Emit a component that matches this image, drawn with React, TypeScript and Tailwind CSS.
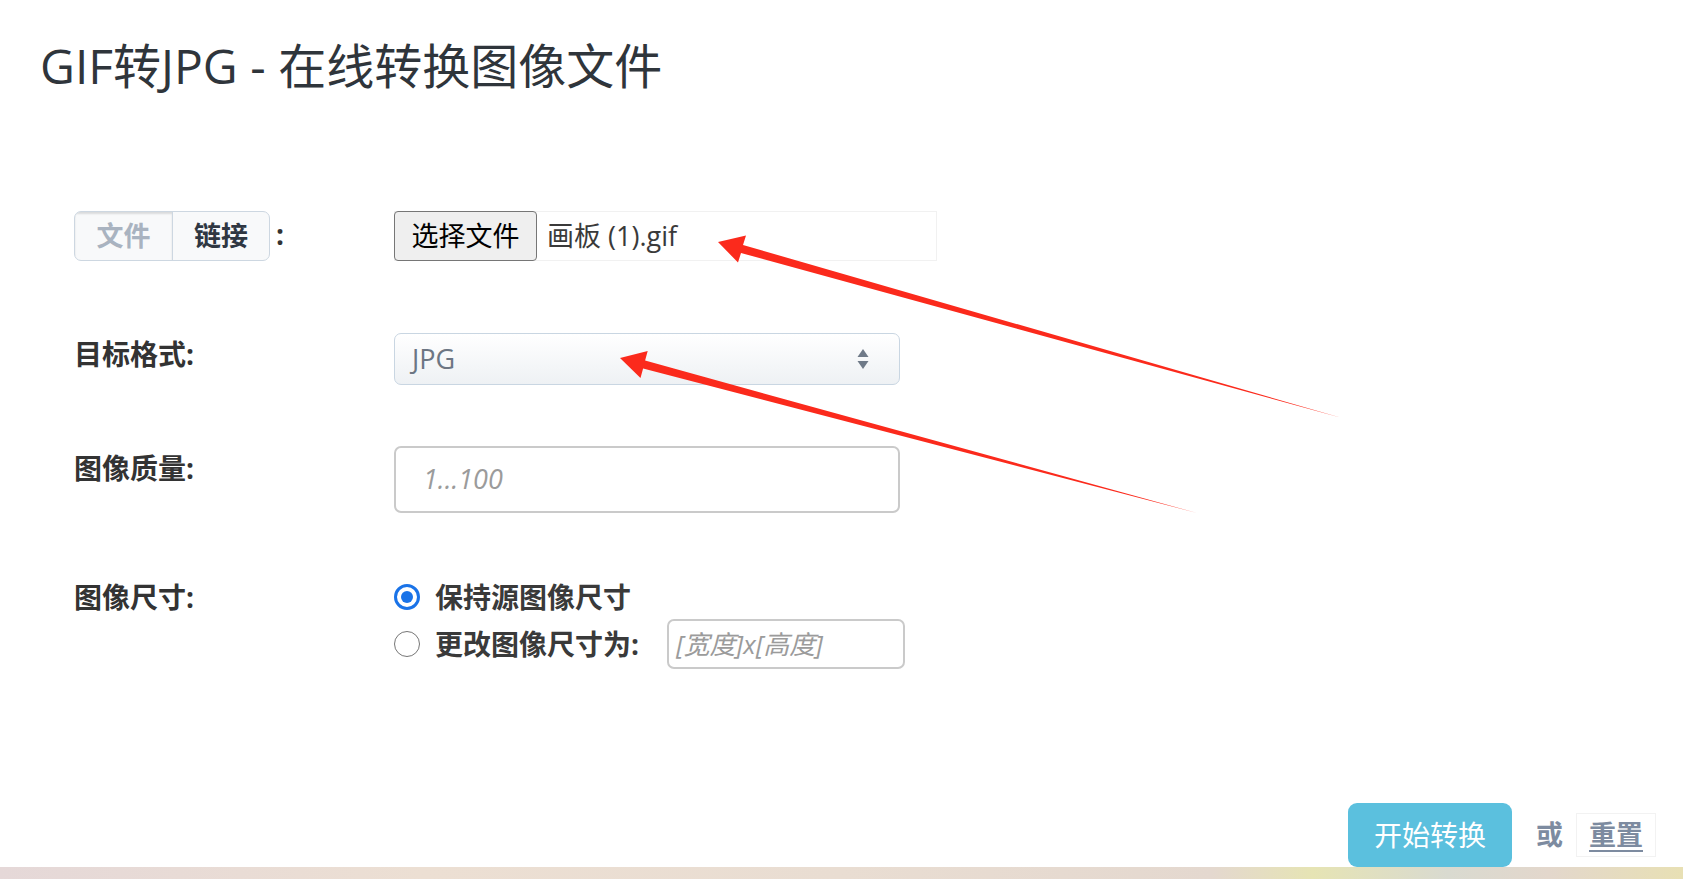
import { ReactNode } from "react";

const font = "font-['Open_Sans','Noto_Sans_CJK_SC',sans-serif]";

// label column is fixed so every control starts on the same line
const Row = ({ label, children, className = "" }: { label: ReactNode; children: ReactNode; className?: string }) => (
  <div className={`flex ${className}`}>
    <div className="w-[320px] shrink-0">{label}</div>
    <div>{children}</div>
  </div>
);

const Label = ({ text, pad = "" }: { text: string; pad?: string }) => (
  <div className={`h-[40px] leading-[40px] text-[28px] font-bold text-[#333] ${pad}`}>{text}</div>
);

const Arrows = () => (
  <svg className="pointer-events-none absolute left-0 top-0" width="1683" height="879" viewBox="0 0 1683 879">
    <polygon fill="#fb2a1c" points="718,242 746,235.5 743,245 1342,418 741,253 738,262.5" />
    <polygon fill="#fb2a1c" points="620,358 647.7,351 645.1,360.6 1197,513 643.1,368.4 640.5,378" />
  </svg>
);

export default function App() {
  return (
    <div className={`relative flex h-screen w-full flex-col overflow-hidden bg-white ${font}`}>
      <div className="flex-1">
        <h1 className="pl-[40px] pt-[37px] text-[48px] leading-[58px] font-normal text-[#2f353b]">
          GIF转JPG - 在线转换图像文件
        </h1>

        <div className="pl-[74px]">
          {/* source: file / link */}
          <Row
            className="mt-[116px]"
            label={
              <div className="flex items-center">
                <div className="flex h-[50px] overflow-hidden rounded-[7px] border border-[#cdd7e1] bg-[#f8f9fa] text-[27px] font-bold">
                  <span className="flex w-[98px] items-center justify-center border-r border-[#cdd7e1] text-[#a9b3c0] shadow-[inset_0_2px_2px_rgba(0,0,0,0.12)]">
                    文件
                  </span>
                  <span className="flex w-[96px] items-center justify-center text-[#2f3742]">链接</span>
                </div>
                <span className="ml-[6px] -mt-[4px] text-[28px] font-bold text-[#333]">:</span>
              </div>
            }
          >
            <div className="flex h-[50px] w-[543px] items-center border border-[#f1f1f1]">
              <button className="h-[50px] w-[143px] -ml-px rounded-[4px] border border-[#767676] bg-[#efefef] text-[27px] text-black">
                选择文件
              </button>
              <span className="ml-[10px] text-[27px] text-[#3a3a3a]">画板 (1).gif</span>
            </div>
          </Row>

          {/* target format */}
          <Row className="mt-[72px]" label={<Label text="目标格式:" pad="mt-[1px]" />}>
            <div className="flex h-[52px] w-[506px] items-center justify-between rounded-[7px] border border-[#c9d6e2] bg-[linear-gradient(180deg,#ffffff,#eef1f4)] pl-[17px] pr-[30px]">
              <span className="text-[27px] text-[#6c7683]">JPG</span>
              <svg width="12" height="22" viewBox="0 0 12 22">
                <polygon points="6,1 11.5,9 0.5,9" fill="#6f7a88" />
                <polygon points="0.5,13 11.5,13 6,21" fill="#6f7a88" />
              </svg>
            </div>
          </Row>

          {/* quality */}
          <Row className="mt-[61px]" label={<Label text="图像质量:" pad="mt-[2px]" />}>
            <div className="flex h-[67px] w-[506px] items-center rounded-[7px] border-2 border-[#cacaca] bg-white pl-[27px]">
              <span className="text-[27px] italic text-[#9b9b9b]">1...100</span>
            </div>
          </Row>

          {/* size */}
          <Row className="mt-[64px]" label={<Label text="图像尺寸:" />}>
            <div className="flex flex-col gap-[2px] text-[28px] font-bold text-[#3a3a3a]">
              <div className="flex h-[40px] items-center">
                <span className="flex h-[26px] w-[26px] items-center justify-center rounded-full border-[3px] border-[#1a73e8]">
                  <span className="h-[12px] w-[12px] rounded-full bg-[#1a73e8]" />
                </span>
                <span className="ml-[15px]">保持源图像尺寸</span>
              </div>
              <div className="flex h-[50px] items-center">
                <span className="h-[26px] w-[26px] rounded-full border-[1.5px] border-[#767676]" />
                <span className="ml-[15px]">更改图像尺寸为:</span>
                <div className="ml-[28px] flex h-[50px] w-[238px] items-center rounded-[7px] border-2 border-[#cacaca] pl-[7px]">
                  <span className="text-[26px] font-normal italic text-[#9b9b9b]">[宽度]x[高度]</span>
                </div>
              </div>
            </div>
          </Row>
        </div>

        {/* actions */}
        <div className="mt-[134px] flex items-center justify-end pr-[27px]">
          <button className="h-[64px] w-[164px] rounded-[9px] bg-[#5bc0de] text-[28px] text-white">开始转换</button>
          <span className="ml-[24px] text-[27px] font-bold text-[#7d8ba0]">或</span>
          <span className="ml-[13px] flex h-[44px] w-[80px] items-center justify-center border border-[#f2f2f2] text-[27px] font-bold text-[#7d8ba0] underline underline-offset-[5px]">
            重置
          </span>
        </div>
      </div>

      <div className="h-[12px] shrink-0 bg-[linear-gradient(90deg,#e5d8d8_0%,#ecdfd3_25%,#e9ddd2_50%,#e4d8cf_72%,#e6e4b4_78%,#d9dad0_86%,#e3d7cc_92%,#e8e0b4_100%)]" />

      <Arrows />
    </div>
  );
}
